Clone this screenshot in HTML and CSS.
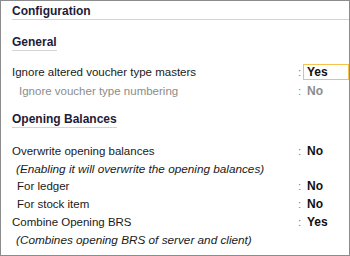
FILE: index.html
```html
<!DOCTYPE html>
<html>
<head>
	<meta charset="utf-8">
	<title>Configuration</title>
	<link rel="stylesheet" href="styles.css">
</head>
<body>
	<div class="panel">
		<div class="title">Configuration</div>

		<div class="section"><span class="heading">General</span></div>
		<div class="row">
			<span class="label">Ignore altered voucher type masters</span>
			<span class="colon">:</span>
			<span class="value active">Yes</span>
		</div>
		<div class="row tall muted">
			<span class="label sub-wide">Ignore voucher type numbering</span>
			<span class="colon">:</span>
			<span class="value">No</span>
		</div>

		<div class="section second"><span class="heading">Opening Balances</span></div>
		<div class="row">
			<span class="label">Overwrite opening balances</span>
			<span class="colon">:</span>
			<span class="value">No</span>
		</div>
		<div class="note">(Enabling it will overwrite the opening balances)</div>
		<div class="row">
			<span class="label sub">For ledger</span>
			<span class="colon">:</span>
			<span class="value">No</span>
		</div>
		<div class="row">
			<span class="label sub">For stock item</span>
			<span class="colon">:</span>
			<span class="value">No</span>
		</div>
		<div class="row">
			<span class="label">Combine Opening BRS</span>
			<span class="colon">:</span>
			<span class="value">Yes</span>
		</div>
		<div class="note">(Combines opening BRS of server and client)</div>
	</div>
</body>
</html>
```

FILE: styles.css
```css
body {
	margin: 0;
	font: 11.5px "Liberation Sans", Arial, sans-serif;
	color: #1a1a1a;
}
.panel {
	width: 350px;
	height: 256px;
	box-sizing: border-box;
	border: 1px solid #8c8c8c;
	padding-left: 11px;
	overflow: hidden;
	background: #fff;
}
.title {
	padding-top: 2px;
	line-height: 16px;
	font-weight: bold;
	font-size: 12px;
	color: #1c1c3a;
	border-bottom: 1px solid #d4d4d4;
}
.section {
	margin-top: 15px;
	margin-bottom: 12px;
}
.section.second {
	margin-top: 12px;
	margin-bottom: 14px;
}
.heading {
	display: inline-block;
	vertical-align: top;
	line-height: 15px;
	font-weight: bold;
	font-size: 12px;
	color: #1c1c3a;
	border-bottom: 1px solid #d4d4d4;
}
.row {
	display: flex;
	align-items: center;
	height: 18px;
}
.row.tall {
	height: 19px;
}
.label {
	flex: 1;
	white-space: nowrap;
}
.sub {
	padding-left: 5px;
}
.sub-wide {
	padding-left: 7px;
}
.colon {
	width: 7px;
	box-sizing: border-box;
	padding-left: 2px;
	color: #808080;
}
.value {
	width: 46px;
	flex-shrink: 0;
	box-sizing: border-box;
	height: 16px;
	line-height: 14px;
	padding-left: 3px;
	border: 1px solid transparent;
	font-weight: bold;
	font-size: 12px;
	color: #111;
}
.value.active {
	border-color: #f6c24c;
}
.muted .label,
.muted .colon,
.muted .value {
	color: #8c8c8c;
}
.note {
	padding-left: 4px;
	line-height: 17px;
	font-size: 11.75px;
	font-style: italic;
}
```
